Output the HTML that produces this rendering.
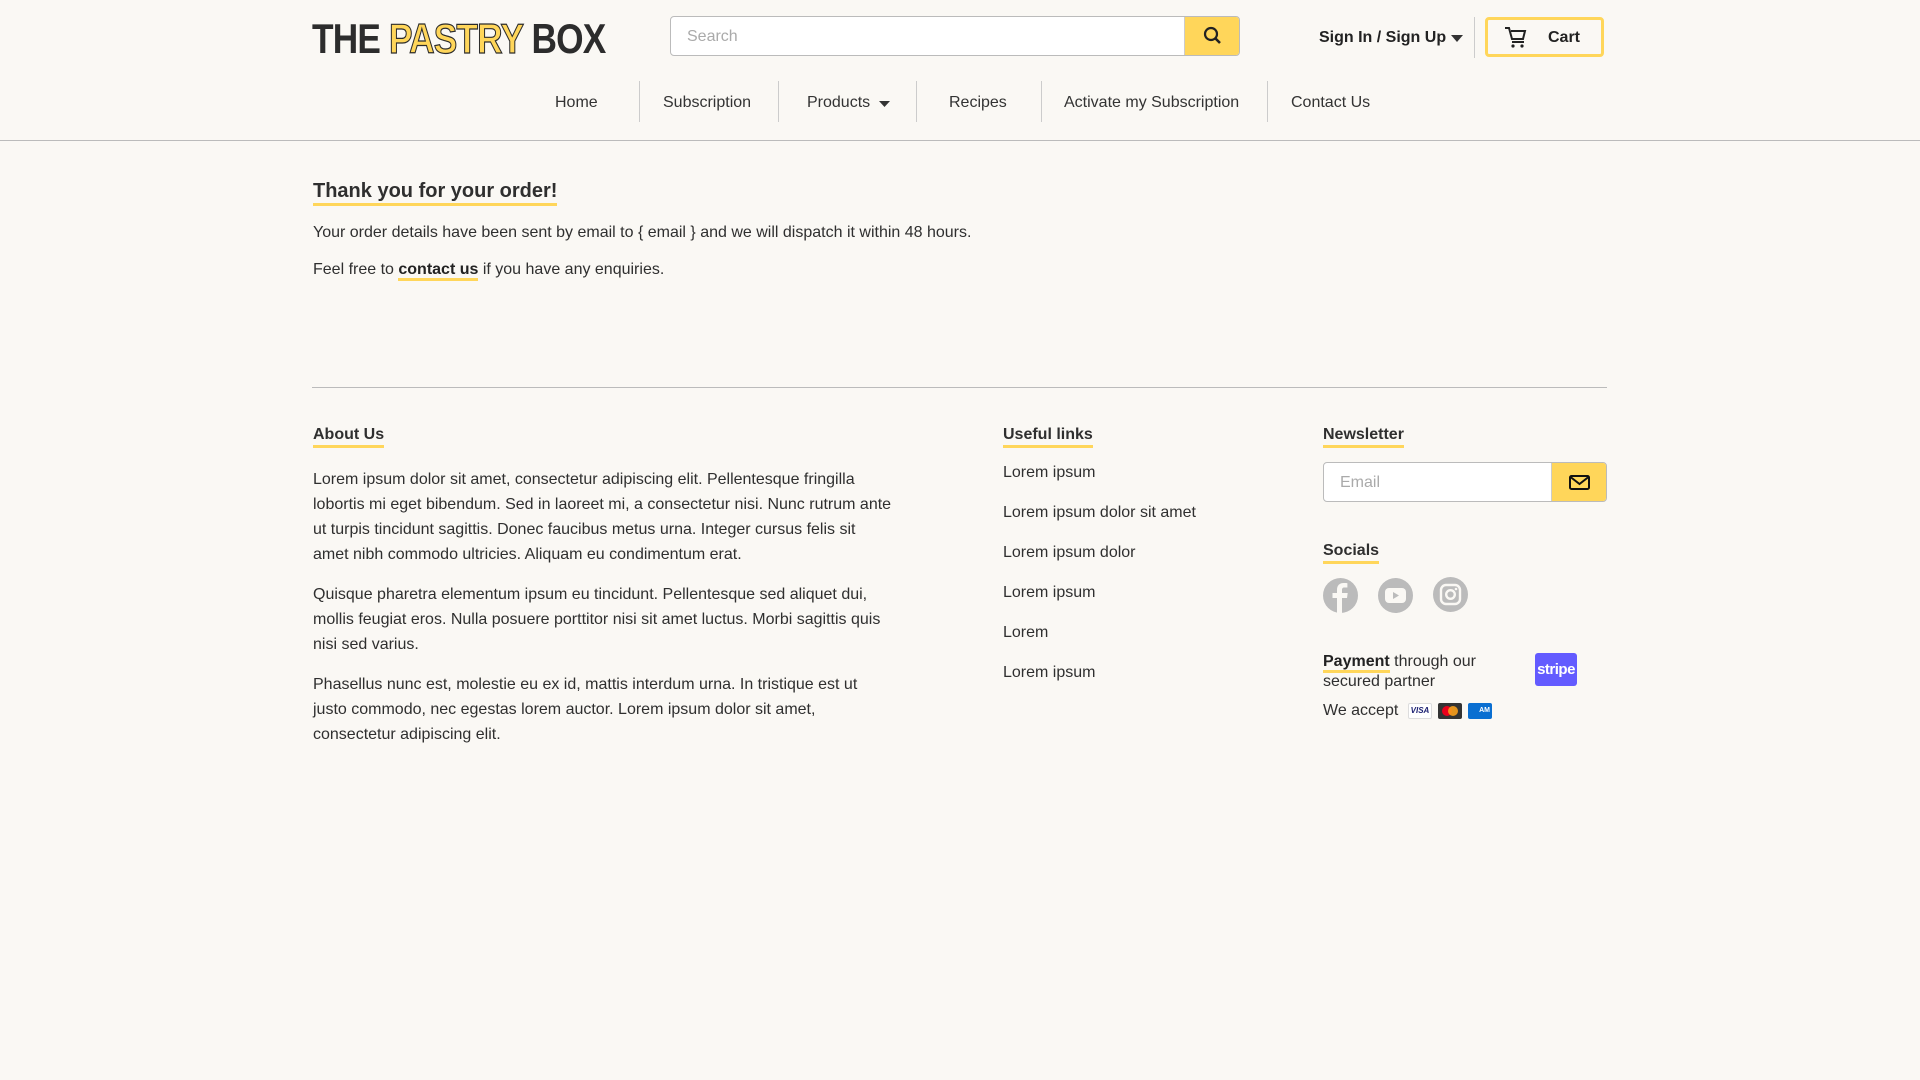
<!DOCTYPE html>
<html><head><meta charset="utf-8"><style>
*{box-sizing:border-box;margin:0;padding:0}
body{width:1920px;height:1080px;background:#faf8f4;font-family:"Liberation Sans",sans-serif;color:#2f2f2f;position:relative;overflow:hidden}
.a{position:absolute;white-space:nowrap}
.logo{left:312px;top:15px;font-size:42px;font-weight:bold;letter-spacing:-1px;transform:scaleX(0.84);transform-origin:left top;color:#2c2c2c}
.logo span{color:#ffd65a;-webkit-text-stroke:1.2px #2c2c2c}
.search{left:670px;top:16px;width:570px;height:40px;border:1px solid #bbb;border-radius:4px;background:#fff;overflow:hidden}
.search .ph{position:absolute;left:16px;top:11px;font-size:16px;color:#aaa}
.search .btn{position:absolute;right:0;top:0;width:55px;height:38px;background:#ffd65a;border-left:1px solid #ccc}
.nav{font-size:16px;color:#333;top:94px}
.sep{width:1px;height:41px;top:81px;background:#ccc}
h2{font-size:20px;font-weight:bold;display:inline-block;border-bottom:3px solid #ffd65a;line-height:22px;padding-bottom:1px}
.h{font-size:16px;font-weight:bold;border-bottom:3px solid #ffd65a;line-height:18px;padding-bottom:1px}
.p{font-size:16px}
.link{font-size:16px}
.soc{width:35px;height:35px;border-radius:50%;background:#bbb;top:578px}
</style></head><body>
<div class="a logo">THE <span>PASTRY</span> BOX</div>
<div class="a search"><div class="ph">Search</div><div class="btn">
<svg width="55" height="38" viewBox="0 0 55 38"><circle cx="26" cy="17" r="6" fill="none" stroke="#222" stroke-width="2.2"/><line x1="30.5" y1="21.5" x2="35" y2="26" stroke="#222" stroke-width="2.6"/></svg></div></div>
<div class="a" style="left:1319px;top:29px;font-size:16px;font-weight:bold;color:#222">Sign In / Sign Up</div>
<svg class="a" style="left:1451px;top:35px" width="12" height="7"><path d="M0 0h12L6 7z" fill="#333"/></svg>
<div class="a" style="left:1474px;top:17px;width:1px;height:41px;background:#ccc"></div>
<div class="a" style="left:1485px;top:17px;width:119px;height:40px;border:3px solid #ffd65a;border-radius:4px"></div>
<svg class="a" style="left:1504px;top:26px" width="24" height="22" viewBox="0 0 24 22"><path d="M1 2h4l3 11h11l2-8H7" fill="none" stroke="#222" stroke-width="2"/><path d="M8 16h12" stroke="#222" stroke-width="2"/><circle cx="9" cy="20" r="1.6" fill="#222"/><circle cx="18" cy="20" r="1.6" fill="#222"/></svg>
<div class="a" style="left:1548px;top:29px;font-size:16px;font-weight:bold;color:#222">Cart</div>

<div class="a nav" style="left:555px">Home</div>
<div class="a sep" style="left:639px"></div>
<div class="a nav" style="left:663px">Subscription</div>
<div class="a sep" style="left:778px"></div>
<div class="a nav" style="left:807px">Products</div>
<svg class="a" style="left:879px;top:101px" width="11" height="6"><path d="M0 0h11L5.5 6z" fill="#333"/></svg>
<div class="a sep" style="left:916px"></div>
<div class="a nav" style="left:949px">Recipes</div>
<div class="a sep" style="left:1041px"></div>
<div class="a nav" style="left:1064px">Activate my Subscription</div>
<div class="a sep" style="left:1267px"></div>
<div class="a nav" style="left:1291px">Contact Us</div>
<div class="a" style="left:0;top:140px;width:1920px;height:1px;background:#bbb"></div>

<div class="a" style="left:313px;top:180px"><h2>Thank you for your order!</h2></div>
<div class="a p" style="left:313px;top:224px">Your order details have been sent by email to { email } and we will dispatch it within 48 hours.</div>
<div class="a p" style="left:313px;top:261px">Feel free to <b style="border-bottom:3px solid #ffd65a;color:#222">contact us</b> if you have any enquiries.</div>

<div class="a" style="left:312px;top:387px;width:1295px;height:1px;background:#bbb"></div>
<div class="a h" style="left:313px;top:426px">About Us</div>
<div class="a p" style="left:313px;top:467px;width:582px;white-space:normal;line-height:25px">
<p style="margin-bottom:15px">Lorem ipsum dolor sit amet, consectetur adipiscing elit. Pellentesque fringilla lobortis mi eget bibendum. Sed in laoreet mi, a consectetur nisi. Nunc rutrum ante ut turpis tincidunt sagittis. Donec faucibus metus urna. Integer cursus felis sit amet nibh commodo ultricies. Aliquam eu condimentum erat.</p>
<p style="margin-bottom:15px">Quisque pharetra elementum ipsum eu tincidunt. Pellentesque sed aliquet dui, mollis feugiat eros. Nulla posuere porttitor nisi sit amet luctus. Morbi sagittis quis nisi sed varius.</p>
<p>Phasellus nunc est, molestie eu ex id, mattis interdum urna. In tristique est ut justo commodo, nec egestas lorem auctor. Lorem ipsum dolor sit amet, consectetur adipiscing elit.</p></div>

<div class="a h" style="left:1003px;top:426px">Useful links</div>
<div class="a link" style="left:1003px;top:464px">Lorem ipsum</div>
<div class="a link" style="left:1003px;top:504px">Lorem ipsum dolor sit amet</div>
<div class="a link" style="left:1003px;top:544px">Lorem ipsum dolor</div>
<div class="a link" style="left:1003px;top:584px">Lorem ipsum</div>
<div class="a link" style="left:1003px;top:624px">Lorem</div>
<div class="a link" style="left:1003px;top:664px">Lorem ipsum</div>

<div class="a h" style="left:1323px;top:426px">Newsletter</div>
<div class="a" style="left:1323px;top:462px;width:284px;height:40px;border:1px solid #bbb;border-radius:4px;background:#fff;overflow:hidden">
<div class="a" style="left:16px;top:11px;font-size:16px;color:#aaa">Email</div>
<div class="a" style="right:0;top:0;width:55px;height:38px;background:#ffd65a;border-left:1px solid #ccc">
<svg width="55" height="38" viewBox="0 0 55 38"><rect x="18" y="13" width="19" height="13" rx="1.5" fill="none" stroke="#111" stroke-width="2"/><path d="M18.5 14l9 7 9-7" fill="none" stroke="#111" stroke-width="2"/></svg></div></div>

<div class="a h" style="left:1323px;top:542px">Socials</div>
<div class="a soc" style="left:1323px"><svg width="35" height="35" viewBox="0 0 35 35"><path d="M19 35V20h5l.7-5H19v-3c0-1.5.5-2.5 2.6-2.5h2.8V5.2C24 5.1 22.4 5 20.6 5 16.8 5 14 7.3 14 11.6V15H9.5v5H14v15z" fill="#faf8f4"/></svg></div>
<div class="a soc" style="left:1378px"><svg width="35" height="35" viewBox="0 0 35 35"><rect x="7" y="10" width="21" height="15" rx="4" fill="#faf8f4"/><path d="M15 14v7l6-3.5z" fill="#bbb"/></svg></div>
<div class="a soc" style="left:1433px;top:577px"><svg width="35" height="35" viewBox="0 0 35 35"><rect x="8" y="8" width="19" height="19" rx="5" fill="none" stroke="#faf8f4" stroke-width="2.4"/><circle cx="17.5" cy="17.5" r="4.3" fill="none" stroke="#faf8f4" stroke-width="2.4"/><circle cx="23" cy="12" r="1.3" fill="#faf8f4"/></svg></div>

<div class="a p" style="left:1323px;top:652px;line-height:20px"><b style="border-bottom:3px solid #ffd65a;color:#222">Payment</b> through our<br>secured partner</div>
<div class="a" style="left:1535px;top:653px;width:42px;height:33px;background:#635bff;border-radius:3px;color:#fff;font-weight:bold;font-size:15px;text-align:center;line-height:33px;letter-spacing:-0.5px">stripe</div>
<div class="a p" style="left:1323px;top:702px">We accept</div>
<div class="a" style="left:1408px;top:703px;width:24px;height:16px;background:#fff;border:1px solid #ddd;border-radius:2px;font-size:8px;font-weight:bold;font-style:italic;color:#1a1f71;text-align:center;line-height:14px">VISA</div>
<div class="a" style="left:1438px;top:703px;width:24px;height:16px;background:#333;border-radius:2px"><div class="a" style="left:4px;top:3px;width:10px;height:10px;border-radius:50%;background:#eb001b"></div><div class="a" style="left:10px;top:3px;width:10px;height:10px;border-radius:50%;background:#f79e1b;opacity:.9"></div></div>
<div class="a" style="left:1468px;top:703px;width:24px;height:16px;background:#0a6fd1;border-radius:2px;color:#fff;font-size:7px;font-weight:bold;text-align:right;line-height:16px;padding-right:2px">AM</div>
</body></html>
